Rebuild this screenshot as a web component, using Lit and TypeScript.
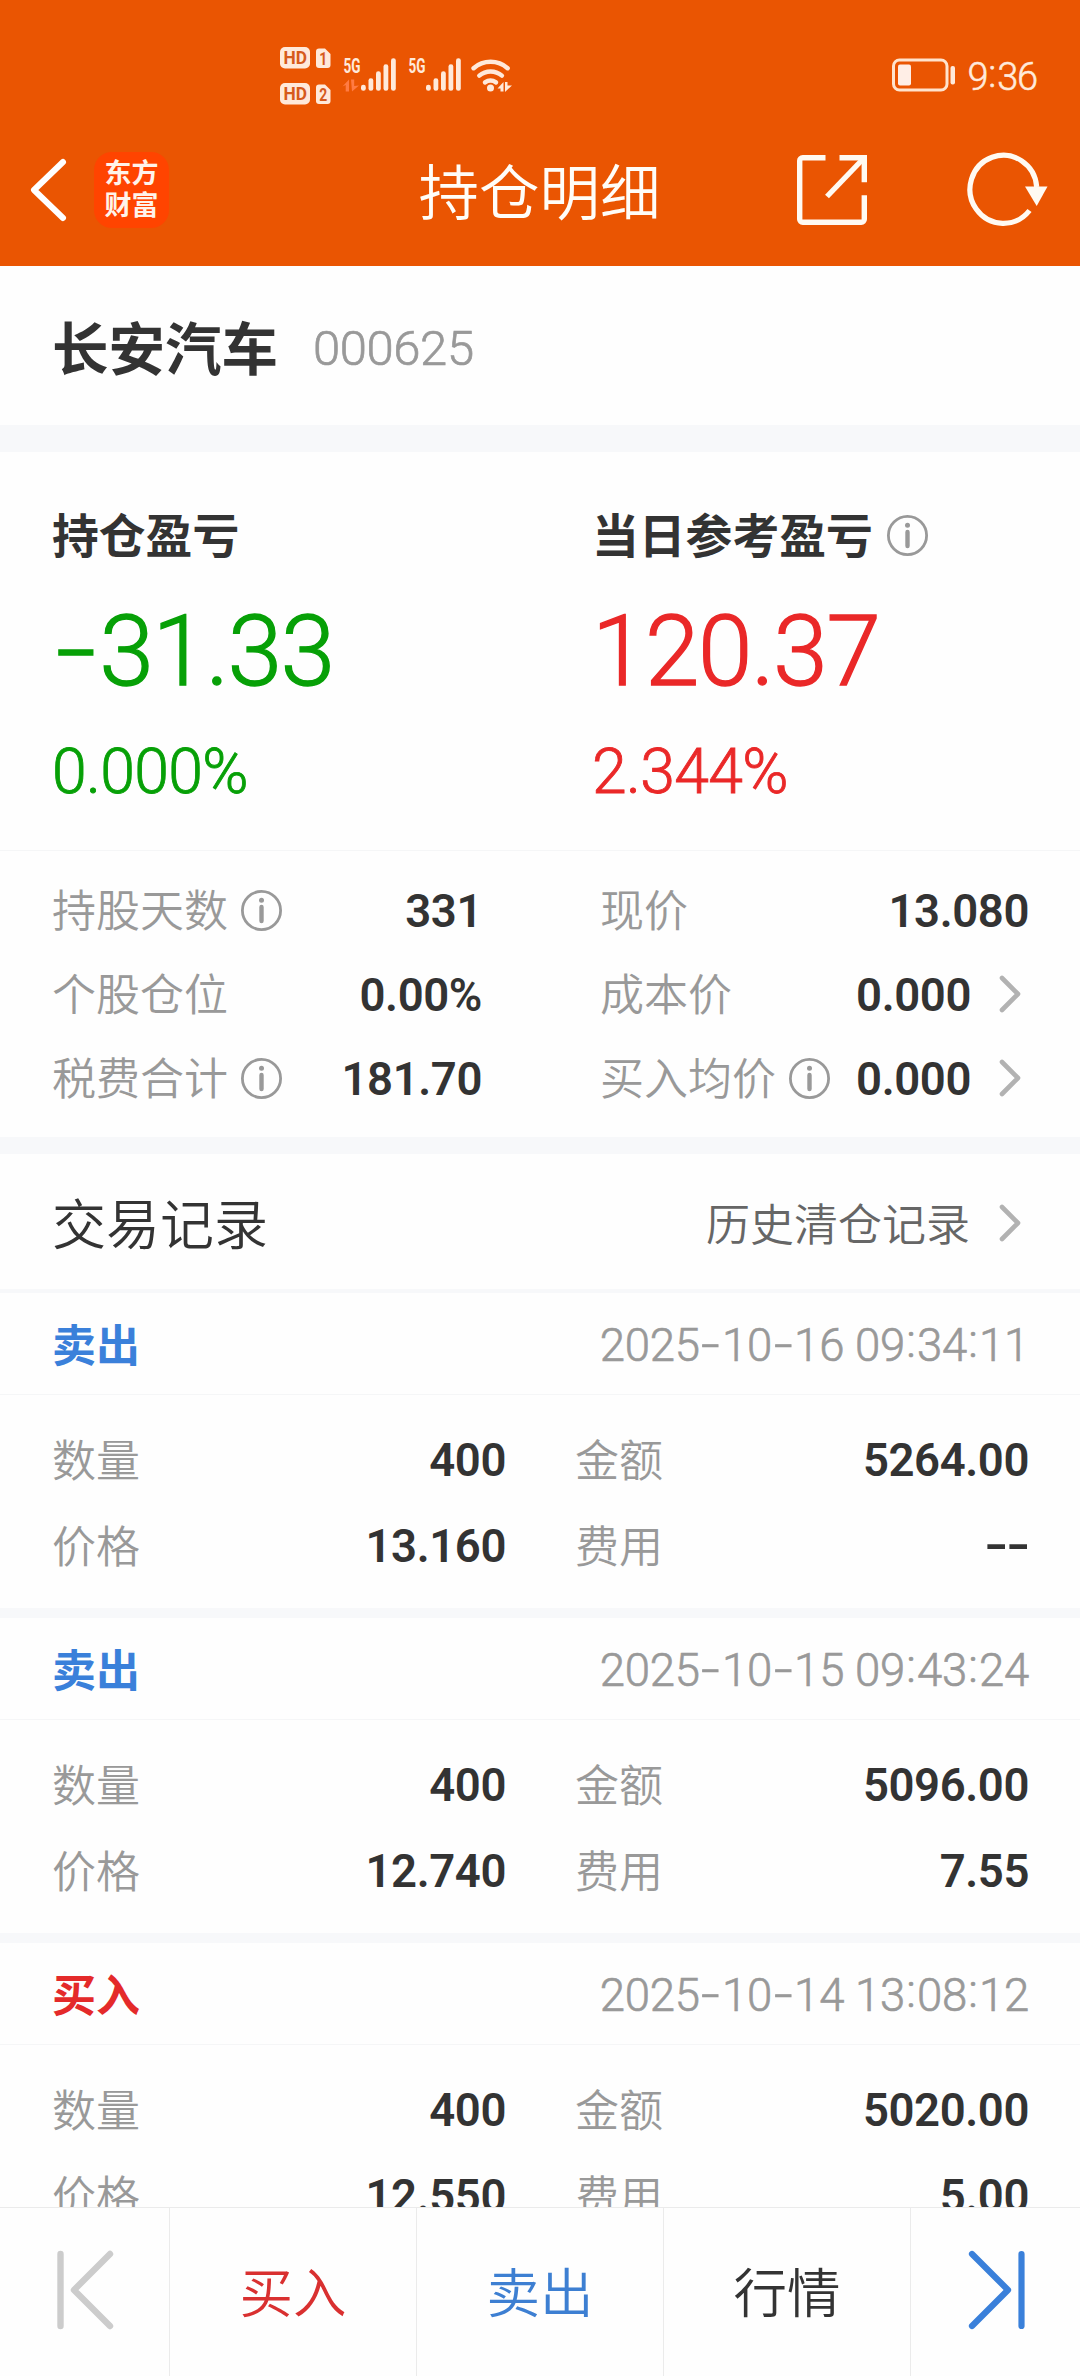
import { LitElement, html, css, svg } from "lit";
import { customElement, property } from "lit/decorators.js";

interface Trade {
  side: "buy" | "sell";
  time: string;
  qty: string;
  amount: string;
  price: string;
  fee: string;
}

const TRADES: Trade[] = [
  { side: "sell", time: "2025-10-16 09:34:11", qty: "400", amount: "5264.00", price: "13.160", fee: "--" },
  { side: "sell", time: "2025-10-15 09:43:24", qty: "400", amount: "5096.00", price: "12.740", fee: "7.55" },
  { side: "buy", time: "2025-10-14 13:08:12", qty: "400", amount: "5020.00", price: "12.550", fee: "5.00" },
];

const SIDE_NAME = { buy: "买入", sell: "卖出" };

/** Renders figures with wide hyphens and centred colons, as the numeral style of the app asks for. */
const figures = (value: string) =>
  value.split("").map((ch) => {
    if (ch === "-") return html`<span class="dash"><span>-</span></span>`;
    if (ch === ":") return html`<span class="colon"><span>:</span></span>`;
    return ch;
  });

const shared = css`
  :host {
    font-family: "Noto Sans CJK SC", sans-serif;
    color: #333;
  }
  .cjk {
    line-height: 1;
    padding-bottom: 0.07em;
    white-space: nowrap;
  }
  .num {
    font-family: Roboto, "Noto Sans CJK SC", sans-serif;
    line-height: 1;
    white-space: pre;
  }
  .thin {
    font-weight: 300;
    -webkit-text-stroke: 0.014em currentColor;
  }
  .bold {
    font-weight: 600;
    font-size: 45.5px;
    letter-spacing: -0.4px;
    padding-top: 2px;
    color: #333;
  }
  .label {
    font-size: 44px;
    font-weight: 350;
    color: #999;
  }
  .dash,
  .colon {
    display: inline-flex;
    justify-content: center;
    width: 0.485em;
    letter-spacing: 0;
  }
  .dash span {
    transform: translateY(-0.02em) scaleX(1.45);
  }
  .colon {
    width: 0.26em;
  }
  .colon span {
    transform: translateY(-0.09em);
  }
  svg {
    display: block;
    flex: none;
  }
`;

const infoIcon = html`<svg width="41" height="41" viewBox="0 0 41 41">
  <circle cx="20.5" cy="20.5" r="19.1" fill="none" stroke="#999" stroke-width="2.8" />
  <circle cx="20.5" cy="10.2" r="2.5" fill="#999" />
  <path d="M20.5 17v14" stroke="#999" stroke-width="4.4" stroke-linecap="round" />
</svg>`;

const chevron = html`<svg width="22" height="38" viewBox="0 0 22 38">
  <path d="M3 3 19 19 3 35" fill="none" stroke="#b2b2b2" stroke-width="4.6" stroke-linecap="round" stroke-linejoin="round" />
</svg>`;

@customElement("status-bar")
export class StatusBar extends LitElement {
  static styles = [
    shared,
    css`
      :host {
        display: flex;
        align-items: center;
        justify-content: space-between;
        height: 150px;
        padding: 0 43px 0 280px;
        box-sizing: border-box;
      }
      .group {
        display: flex;
        align-items: center;
      }
      .time {
        font-size: 38px;
        letter-spacing: -1.2px;
        color: #ffeadb;
        margin-left: 11px;
        padding-top: 3px;
      }
    `,
  ];

  private badge(n: number, y: number) {
    return svg`
      <rect x="0" y=${y} width="30" height="21.5" rx="5" fill="#ffe9da" />
      <text x="3.5" y=${y + 17.4} font-family="Roboto" font-weight="700" font-size="18.5" textLength="23.5" lengthAdjust="spacingAndGlyphs" fill="#d65a1c">HD</text>
      <path d=${`M39 ${y + 1.5}h6l5.5 5.5v11a3 3 0 0 1-3 3h-8.500a3 3 0 0 1-3-3v-13.500a3 3 0 0 1 3-3z`} fill="#ffe9da" />
      <text x="43.300" y=${y + 17.6} text-anchor="middle" font-family="Roboto" font-weight="700" font-size="17.5" textLength="8" lengthAdjust="spacingAndGlyphs" fill="#d65a1c">${n}</text>`;
  }

  private signal(x: number, arrows: boolean) {
    const tops = [27, 20.5, 13.5, 6.5, 0.5];
    return svg`
      <text x=${x} y="38" font-family="Roboto" font-weight="700" font-size="20.500" textLength="17" lengthAdjust="spacingAndGlyphs" fill="#ffe9da">5G</text>
      ${tops.map(
        (t, i) => svg`<rect x=${x + 17.5 + i * 7.5} y=${22.8 + t} width="4.800" height=${33 - t} rx="2.300" fill="#ffe9da" />`,
      )}
      ${arrows ? svg`<path d="M62.500 51.500 69 44.500v12h-3.300v-6.500z M71 44.500h3.200v6.500l4.800-.500-7 6z" fill="#ff7b43" />` : ""}`;
  }

  render() {
    return html`
      <div class="group">
        <svg width="240" height="80" viewBox="0 0 240 80">
          ${this.badge(1, 12)} ${this.badge(2, 48)} ${this.signal(63.5, true)} ${this.signal(128.5, false)}
          <g fill="none" stroke="#ffe9da" stroke-width="4.500" stroke-linecap="round">
            <path d="M193.600 33.200a26 26 0 0 1 34 0" />
            <path d="M199.300 40.600a17.500 17.500 0 0 1 22.600 0" />
            <path d="M205 47.400a9.500 9.500 0 0 1 11 0" />
          </g>
          <circle cx="210.500" cy="53" r="3.500" fill="#ffe9da" />
          <path d="M217.500 53.500 223.500 47v9.500h-3v-3z M225 47h2.500v3.500h4.500l-7 6.500z" fill="#ffe9da" />
        </svg>
      </div>
      <div class="group">
        <svg width="64" height="34" viewBox="0 0 64 34">
          <rect x="1.500" y="2" width="53.500" height="30" rx="6" fill="none" stroke="#ffe3cd" stroke-width="3" />
          <rect x="6" y="6.500" width="13" height="21" rx="2" fill="#ffeee6" />
          <rect x="58.500" y="8" width="4.500" height="18.500" rx="2" fill="#ffe9da" />
        </svg>
        <span class="num thin time">${figures("9:36")}</span>
      </div>
    `;
  }
}

@customElement("title-bar")
export class TitleBar extends LitElement {
  static styles = [
    shared,
    css`
      :host {
        display: grid;
        grid-template-columns: 1fr auto 1fr;
        align-items: center;
        height: 80px;
        padding: 0 31px 0 29px;
      }
      .left {
        display: flex;
        align-items: center;
        gap: 25px;
      }
      .right {
        display: flex;
        align-items: center;
        justify-content: flex-end;
        gap: 99px;
      }
      .logo {
        display: grid;
        place-content: center;
        width: 75px;
        height: 76px;
        border-radius: 18px;
        background: #ff4400;
        color: #fff3ea;
        font-size: 27px;
        line-height: 32px;
        font-weight: 700;
        box-sizing: border-box;
        padding-bottom: 5px;
      }
      .title {
        font-size: 60.5px;
        font-weight: 350;
        color: #fffdf8;
        padding: 0 0 1px 1px;
      }
    `,
  ];

  render() {
    return html`
      <div class="left">
        <svg width="40" height="66" viewBox="0 0 40 66">
          <path d="M34 5 5 33 34 61" fill="none" stroke="#fff" stroke-width="6" stroke-linecap="round" stroke-linejoin="round" />
        </svg>
        <div class="logo"><span>东方</span><span>财富</span></div>
      </div>
      <div class="title cjk">持仓明细</div>
      <div class="right">
        <svg width="72" height="72" viewBox="0 0 72 72" fill="none" stroke="#fffaf2" stroke-width="5.400">
          <path d="M29.500 3.700H6.700a3 3 0 0 0-3 3v58.600a3 3 0 0 0 3 3h58.600a3 3 0 0 0 3-3V41.300" />
          <path d="M43.500 3.700h24.800v24.500" />
          <path d="M31 42.500 67 5" />
        </svg>
        <svg width="82" height="76" viewBox="0 0 82 76">
          <path d="M69.700 35A33.400 34 0 1 0 62.500 58.500" fill="none" stroke="#fffaf2" stroke-width="5.200" />
          <path d="M58 34.500h22.500L69.700 54z" fill="#fffaf2" />
        </svg>
      </div>
    `;
  }
}

@customElement("stat-cell")
export class StatCell extends LitElement {
  @property() label = "";
  @property() value = "";
  @property({ type: Boolean }) info = false;
  @property({ type: Boolean }) link = false;

  static styles = [
    shared,
    css`
      :host {
        display: flex;
        align-items: center;
        height: 84px;
      }
      .label {
        margin-right: 13px;
      }
      .value {
        margin-left: auto;
        padding-top: 4px;
      }
      .arrow {
        margin: 0 8px 0 28px;
      }
    `,
  ];

  render() {
    return html`
      <span class="label cjk">${this.label}</span>
      ${this.info ? infoIcon : ""}
      <span class="value num bold">${this.value}</span>
      ${this.link ? html`<span class="arrow">${chevron}</span>` : ""}
    `;
  }
}

@customElement("trade-record")
export class TradeRecord extends LitElement {
  @property({ attribute: false }) trade!: Trade;

  static styles = [
    shared,
    css`
      :host {
        display: block;
        border-bottom: 10px solid #f7f8fa;
      }
      .head {
        display: flex;
        align-items: center;
        justify-content: space-between;
        height: 98px;
        padding: 3px 51px 0 52px;
        border-bottom: 1px solid #f5f6f7;
      }
      .side {
        font-size: 44px;
        font-weight: 700;
      }
      .sell {
        color: #3a80da;
      }
      .buy {
        color: #e42a2a;
      }
      .time {
        font-size: 45.5px;
        letter-spacing: -0.2px;
        padding-top: 2px;
        color: #999;
      }
      .body {
        display: grid;
        grid-template-columns: 454px 454px;
        column-gap: 69px;
        grid-auto-rows: 86px;
        padding: 22px 51px 19px 52px;
      }
      .pair {
        display: flex;
        align-items: center;
        justify-content: space-between;
      }
    `,
  ];

  private pair(label: string, value: string) {
    return html`<div class="pair">
      <span class="label cjk">${label}</span><span class="num bold">${figures(value)}</span>
    </div>`;
  }

  render() {
    const t = this.trade;
    return html`
      <div class="head">
        <span class="side cjk ${t.side}">${SIDE_NAME[t.side]}</span>
        <span class="time num thin">${figures(t.time)}</span>
      </div>
      <div class="body">
        ${this.pair("数量", t.qty)} ${this.pair("金额", t.amount)} ${this.pair("价格", t.price)}
        ${this.pair("费用", t.fee)}
      </div>
    `;
  }
}

@customElement("app-root")
export class AppRoot extends LitElement {
  static styles = [
    shared,
    css`
      :host {
        display: flex;
        flex-direction: column;
        width: 1080px;
        height: 2376px;
        overflow: hidden;
        background: #fefefe;
      }
      .top {
        background: #ea5502;
        height: 266px;
        flex: none;
      }
      .content {
        flex: 1;
        min-height: 0;
        overflow: hidden;
      }
      .stock {
        display: flex;
        align-items: center;
        gap: 35px;
        height: 155px;
        padding: 4px 52px 0;
      }
      .name {
        font-size: 56.5px;
        font-weight: 700;
      }
      .code {
        font-size: 49px;
        letter-spacing: -0.4px;
        padding-top: 1px;
        color: #999;
      }
      .band {
        height: 27px;
        background: #f7f8fa;
      }
      .band.mid {
        height: 17px;
      }
      .band.slim {
        height: 4px;
      }
      .pnl {
        display: grid;
        grid-template-columns: 540px 1fr;
        padding: 59px 0 0 52px;
        height: 339px;
        border-bottom: 1px solid #f5f6f7;
      }
      .caption {
        display: flex;
        align-items: center;
        gap: 14px;
        height: 48px;
        font-size: 46.8px;
        font-weight: 700;
      }
      .big {
        font-size: 98px;
        line-height: 100px;
        margin-top: 43px;
        letter-spacing: -1.3px;
      }
      .pct {
        font-size: 62.5px;
        line-height: 64px;
        margin-top: 38px;
        letter-spacing: -0.7px;
      }
      .down {
        color: #07a007;
      }
      .up {
        color: #ea2828;
      }
      .stats {
        display: grid;
        grid-template-columns: 430px 429px;
        column-gap: 118px;
        padding: 17px 51px 17px 52px;
      }
      .heading {
        display: flex;
        align-items: center;
        justify-content: space-between;
        height: 131px;
        padding: 4px 59px 0 52px;
      }
      .heading .title {
        font-size: 54px;
        font-weight: 350;
      }
      .history {
        display: flex;
        align-items: center;
        gap: 29px;
        font-size: 44px;
        font-weight: 350;
        color: #666;
      }
      .actions {
        display: grid;
        grid-template-columns: 169px 247px 247px 247px 1fr;
        flex: none;
        height: 168px;
        border-top: 1px solid #ebebeb;
      }
      .action {
        display: flex;
        align-items: center;
        justify-content: center;
        font-size: 53.5px;
        font-weight: 350;
      }
      .action + .action {
        border-left: 1px solid #ebebeb;
      }
      .icon {
        padding-bottom: 5px;
      }
      .buy {
        color: #d93030;
      }
      .sell {
        color: #3d7fd2;
      }
    `,
  ];

  render() {
    return html`
      <header class="top">
        <status-bar></status-bar>
        <title-bar></title-bar>
      </header>
      <main class="content">
        <section class="stock">
          <span class="name cjk">长安汽车</span>
          <span class="code num thin">000625</span>
        </section>
        <div class="band"></div>
        <section class="pnl">
          <div>
            <div class="caption"><span class="cjk">持仓盈亏</span></div>
            <div class="big num thin down">${figures("-31.33")}</div>
            <div class="pct num thin down">0.000%</div>
          </div>
          <div>
            <div class="caption"><span class="cjk">当日参考盈亏</span>${infoIcon}</div>
            <div class="big num thin up">120.37</div>
            <div class="pct num thin up">2.344%</div>
          </div>
        </section>
        <section class="stats">
          <stat-cell label="持股天数" value="331" info></stat-cell>
          <stat-cell label="现价" value="13.080"></stat-cell>
          <stat-cell label="个股仓位" value="0.00%"></stat-cell>
          <stat-cell label="成本价" value="0.000" link></stat-cell>
          <stat-cell label="税费合计" value="181.70" info></stat-cell>
          <stat-cell label="买入均价" value="0.000" info link></stat-cell>
        </section>
        <div class="band mid"></div>
        <section class="heading">
          <span class="title cjk">交易记录</span>
          <span class="history"><span class="cjk">历史清仓记录</span>${chevron}</span>
        </section>
        <div class="band slim"></div>
        ${TRADES.map((t) => html`<trade-record .trade=${t}></trade-record>`)}
      </main>
      <nav class="actions">
        <div class="action icon">
          <svg width="58" height="80" viewBox="0 0 58 80" fill="none" stroke="#ccc" stroke-width="6.400" stroke-linecap="round" stroke-linejoin="round">
            <path d="M4.500 4v72" />
            <path d="M54 4 18 40 54 76" />
          </svg>
        </div>
        <div class="action buy"><span class="cjk">买入</span></div>
        <div class="action sell"><span class="cjk">卖出</span></div>
        <div class="action"><span class="cjk">行情</span></div>
        <div class="action icon">
          <svg width="58" height="80" viewBox="0 0 58 80" fill="none" stroke="#3a80da" stroke-width="6.200" stroke-linecap="round" stroke-linejoin="round">
            <path d="M54.500 4v72" />
            <path d="M5 4 41 40 5 76" />
          </svg>
        </div>
      </nav>
    `;
  }
}
